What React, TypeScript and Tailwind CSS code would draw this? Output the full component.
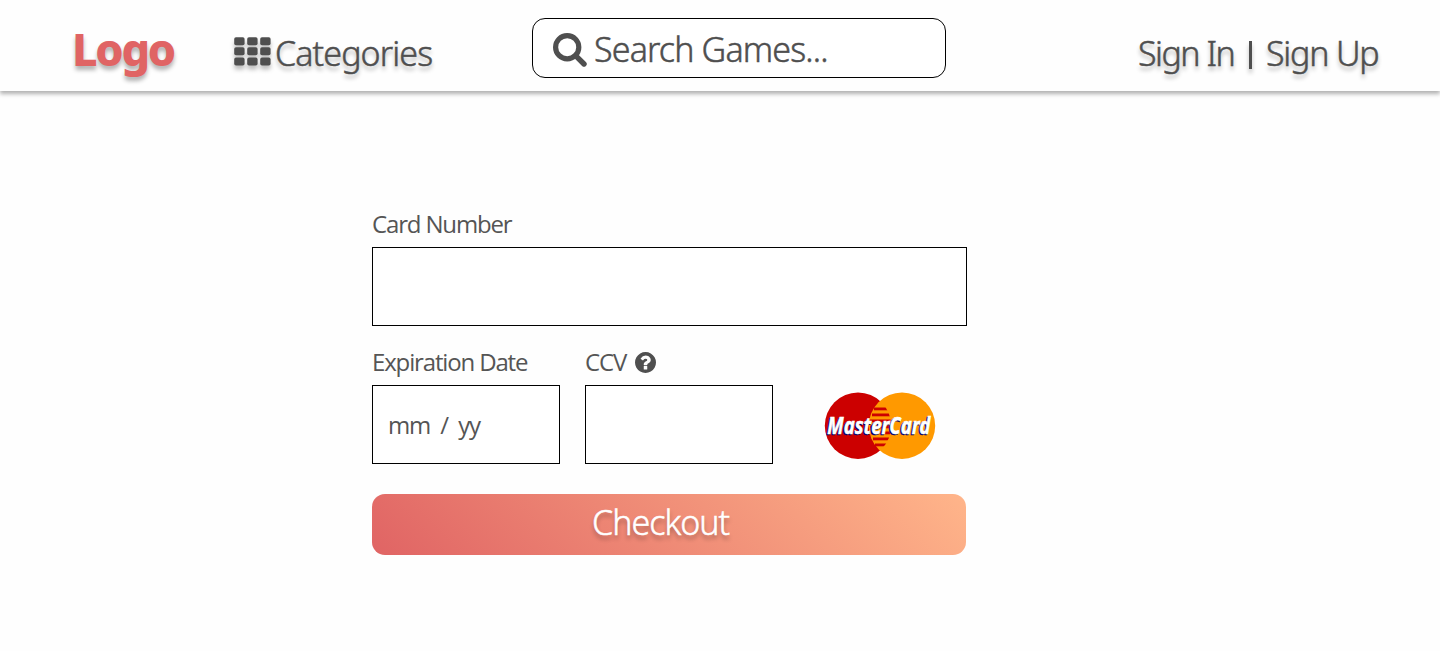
import React from "react";

const heading = "font-['Noto_Sans','Open_Sans',sans-serif] font-light text-[#4f4f4f] whitespace-nowrap [-webkit-text-stroke:0.5px_#4f4f4f]";
const label = "font-['Open_Sans','Noto_Sans',sans-serif] text-2xl leading-8 text-[#555555] tracking-[-1.15px] whitespace-nowrap";
const lifted = "[text-shadow:0_4px_4px_rgba(0,0,0,0.3)]";

function GridIcon() {
  return (
    <svg width="37" height="29" viewBox="0 0 37 29" fill="#4f4f4f" className="shrink-0 overflow-visible drop-shadow-[0_4px_2px_rgba(0,0,0,0.25)]">
      {[0, 10, 20.4].map((y) =>
        [0, 13, 26].map((x) => <rect key={`${x}-${y}`} x={x + 0.2} y={y + 0.2} width="10.4" height="8" rx="1.8" />)
      )}
    </svg>
  );
}

function SearchIcon() {
  return (
    <svg width="34" height="34" viewBox="0 0 34 34" fill="none" stroke="#4f4f4f" className="shrink-0">
      <circle cx="14.2" cy="14.2" r="11.6" strokeWidth="5.2" />
      <path d="M22.6 22.6L31 31" strokeWidth="5.4" strokeLinecap="round" />
    </svg>
  );
}

function HelpIcon() {
  return (
    <svg width="21" height="21" viewBox="0 0 1536 1536" fill="#4f4f4f" className="shrink-0">
      <path d="M896 1248v-192q0-14-9-23t-23-9H672q-14 0-23 9t-9 23v192q0 14 9 23t23 9h192q14 0 23-9t9-23zm256-672q0-88-55.500-163T958 297t-170-41q-243 0-371 213-15 24 8 42l132 100q7 6 19 6 16 0 25-12 53-68 86-92 34-24 86-24 48 0 85.500 26t37.500 59q0 38-20 61t-68 45q-63 28-115.500 86.500T640 892v36q0 14 9 23t23 9h192q14 0 23-9t9-23q0-19 21.500-49.500T972 829q32-18 49-28.500t46-35 44.500-48 28-60.500 12.500-81zm384 192q0 209-103 385.500T1153.500 1433 768 1536t-385.500-103T103 1153.500 0 768t103-385.500T382.500 103 768 0t385.500 103T1433 382.500 1536 768z" />
    </svg>
  );
}

function CardBrand() {
  return (
    <svg width="112" height="68" viewBox="0 0 112 68" className="shrink-0 overflow-visible" aria-label="MasterCard">
      <defs>
        <clipPath id="left-disc"><circle cx="34" cy="33.7" r="33.2" /></clipPath>
      </defs>
      <circle cx="34" cy="33.7" r="33.2" fill="#cc0000" />
      <circle cx="78" cy="33.7" r="33.2" fill="#ff9900" />
      <g clipPath="url(#left-disc)" fill="#cc0000">
        <rect x="50" y="15.5" width="17" height="2.8" />
        <rect x="48" y="21.5" width="19.500" height="2.8" />
        <rect x="46" y="27.5" width="22" height="2.8" />
        <rect x="46" y="33.5" width="22" height="2.8" />
        <rect x="47" y="39.5" width="21" height="2.8" />
        <rect x="49" y="45.5" width="19" height="2.8" />
        <rect x="51" y="51.5" width="16" height="2.8" />
      </g>
      <g fontFamily="Noto Sans, Open Sans, sans-serif" fontSize="22.500" fontWeight="700" fontStyle="italic">
        <text x="2" y="43.2" textLength="103" lengthAdjust="spacingAndGlyphs" fill="#000066" stroke="#000066" strokeWidth="0.6" aria-hidden="true">MasterCard</text>
        <text x="3.3" y="41.800" textLength="103" lengthAdjust="spacingAndGlyphs" fill="#ffffff" stroke="#ffffff" strokeWidth="0.6">MasterCard</text>
      </g>
    </svg>
  );
}

export default function App() {
  return (
    <div className="h-[651px] w-[1440px] overflow-hidden bg-[#fefefe]">
      <header className="flex h-[91px] items-start bg-[#fefefe] shadow-[0_3px_4px_rgba(0,0,0,0.3)]">
        <div className={`ml-[72px] mt-[19px] w-[162px] font-['Noto_Sans',sans-serif] text-[45px] font-extrabold leading-[60px] tracking-[-2.3px] text-[#e06464] ${lifted}`}>Logo</div>
        <nav className="flex w-[298px] items-start">
          <div className="mt-[37px]"><GridIcon /></div>
          <span className={`${heading} ${lifted} ml-1 mt-[29px] text-[34px] leading-[48px] tracking-[-0.9px]`}>Categories</span>
        </nav>
        <div className="mt-[18px] flex h-[60px] w-[414px] items-start rounded-[13px] border border-black bg-white pl-5">
          <div className="mt-[14px]"><SearchIcon /></div>
          <span className={`${heading} ml-[7px] mt-[6px] text-[34px] leading-[48px] tracking-[-0.85px]`}>Search Games...</span>
        </div>
        <nav className={`${heading} ${lifted} ml-[192px] mt-[29px] flex text-[34px] leading-[48px] tracking-[-1.5px]`}>
          <a className="w-[111px]">Sign In</a>
          <span className="mt-[12px] h-[28px] w-[3px] bg-[#4f4f4f] shadow-[0_4px_4px_rgba(0,0,0,0.25)]" />
          <a className="ml-[14px] tracking-[-1.2px]">Sign Up</a>
        </nav>
      </header>
      <main className="ml-[372px] mt-[117px] w-[595px]">
        <div className={label}>Card Number</div>
        <div className="mt-[7px] h-[79px] border border-black bg-white" />
        <div className="mt-5 flex">
          <div className="w-[188px]">
            <div className={label}>Expiration Date</div>
            <div className="mt-[7px] flex h-[79px] items-center border border-black bg-white pl-[15px]">
              <span className={`${label} whitespace-pre`}>mm  /  yy</span>
            </div>
          </div>
          <div className="ml-[25px] w-[188px]">
            <div className="flex items-center">
              <span className={`${label} w-[50px]`}>CCV</span>
              <HelpIcon />
            </div>
            <div className="mt-[7px] h-[79px] border border-black bg-white" />
          </div>
          <div className="ml-[51px] mt-[46px]"><CardBrand /></div>
        </div>
        <button className={`mt-[30px] flex h-[61px] w-[594px] items-start rounded-[13px] bg-[linear-gradient(45deg,#e06464,#ffb58a)] pl-[220px] ${lifted}`}>
          <span className="mt-[4px] whitespace-nowrap font-['Noto_Sans',sans-serif] text-[34px] font-light leading-[48px] tracking-[-1px] text-white [-webkit-text-stroke:0.5px_white]">Checkout</span>
        </button>
      </main>
    </div>
  );
}
